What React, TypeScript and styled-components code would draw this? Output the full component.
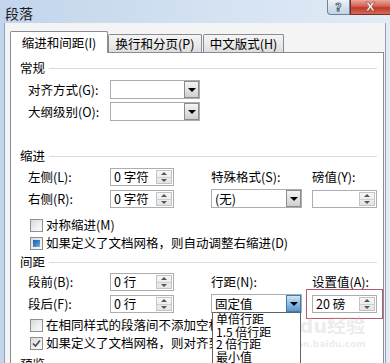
import React from "react";
import styled, { createGlobalStyle } from "styled-components";

const GlobalStyle = createGlobalStyle`
  html, body {
    margin: 0;
    padding: 0;
  }
  body {
    width: 390px;
    height: 363px;
    overflow: hidden;
    font-family: "Noto Sans CJK SC", "Liberation Sans", sans-serif;
    font-size: 12.5px;
    color: #000;
  }
`;

const Window = styled.div`
  position: relative;
  width: 390px;
  height: 363px;
  display: flex;
  flex-direction: column;
  overflow: hidden;
  background: linear-gradient(90deg, #c2d5ec 0%, #d4e2f2 55%, #e2ebf6 100%);
`;

const TitleBar = styled.div`
  height: 23px;
  flex: none;
  display: flex;
  justify-content: space-between;
  align-items: flex-start;
`;

const Title = styled.div`
  padding: 4px 0 0 5px;
  font-size: 14px;
  line-height: 18px;
  color: #1b1b1b;
`;

const Caption = styled.div`
  display: flex;
`;

const HelpButton = styled.div`
  width: 23px;
  height: 15px;
  box-sizing: border-box;
  border: 1px solid #6f8197;
  border-top: none;
  border-radius: 0 0 0 4px;
  background: linear-gradient(180deg, #eef3f9 0%, #d6e1ee 50%, #c5d3e4 100%);
  display: flex;
  align-items: center;
  justify-content: center;
  font-family: "DejaVu Sans", sans-serif;
  font-weight: bold;
  font-size: 11px;
  color: #f4f7fb;
  -webkit-text-stroke: 0.8px #44546a;
`;

const CloseButton = styled.div`
  width: 40px;
  height: 15px;
  box-sizing: border-box;
  border: 1px solid #7a2d25;
  border-top: none;
  border-right: none;
  background: linear-gradient(180deg, #e9a89b 0%, #d3604f 45%, #c0392b 55%, #d46a55 100%);
  display: flex;
  align-items: center;
  justify-content: center;
  font-family: "DejaVu Sans", sans-serif;
  font-weight: bold;
  font-size: 12px;
  color: #fff;
  -webkit-text-stroke: 0.5px #7a2d25;
`;

const Client = styled.div`
  flex: 1;
  margin: 0 4px;
  border-left: 1px solid #8fa1b6;
  border-right: 1px solid #8fa1b6;
  background: #f4f4f4;
  padding: 0 1px 0 5px;
  display: flex;
  flex-direction: column;
`;

const TabStrip = styled.div`
  height: 29px;
  flex: none;
  display: flex;
  align-items: flex-end;
  position: relative;
  z-index: 1;
`;

const Tab = styled.div<{ $width: number; $active?: boolean; $gap?: number }>`
  width: ${(p) => p.$width}px;
  height: ${(p) => (p.$active ? 22 : 18)}px;
  margin-left: ${(p) => p.$gap ?? 0}px;
  margin-bottom: ${(p) => (p.$active ? -1 : 0)}px;
  box-sizing: border-box;
  border: 1px solid #898c95;
  border-bottom: none;
  border-radius: 2px 2px 0 0;
  background: ${(p) =>
    p.$active
      ? "#fff"
      : "linear-gradient(180deg, #f5f5f5 0%, #ebebeb 50%, #dddddd 100%)"};
  display: flex;
  align-items: center;
  justify-content: center;
  padding-top: ${(p) => (p.$active ? 0 : 1)}px;
  white-space: nowrap;
  line-height: 16px;
`;

const Panel = styled.div`
  flex: 1;
  border: 1px solid #898c95;
  border-bottom: none;
  background: #fff;
  padding: 7px 6px 0 9px;
  display: flex;
  flex-direction: column;
`;

const SectionTitle = styled.div<{ $top?: number }>`
  margin-top: ${(p) => p.$top ?? 0}px;
  height: 16px;
  line-height: 16px;
  display: flex;
  align-items: center;
  gap: 4px;
  white-space: nowrap;

  &::after {
    content: "";
    flex: 1;
    border-top: 1px solid #d5dce4;
  }
`;

const FieldGrid = styled.div<{ $top?: number }>`
  margin-top: ${(p) => p.$top ?? 0}px;
  padding-left: 8px;
  display: grid;
  grid-template-columns: 82px 64px 37px 91px 10px 65px;
  grid-auto-rows: 18px;
  row-gap: 4px;
`;

const Label = styled.div<{ $col?: number }>`
  grid-column: ${(p) => p.$col ?? 1};
  display: flex;
  align-items: center;
  white-space: nowrap;
  line-height: 18px;
`;

const SelectBox = styled.div<{ $col?: number; $width: number }>`
  grid-column: ${(p) => p.$col ?? 2};
  position: relative;
  width: ${(p) => p.$width}px;
  height: 19px;
  margin-top: -1px;
  box-sizing: border-box;
  border: 1px solid #abadb3;
  background: #fff;
  display: flex;
  align-items: center;
  justify-content: space-between;
`;

const SelectValue = styled.span`
  padding-left: 3px;
  line-height: 16px;
  white-space: nowrap;
`;

const DropButton = styled.div<{ $pressed?: boolean }>`
  width: 15px;
  height: 100%;
  box-sizing: border-box;
  border: 1px solid ${(p) => (p.$pressed ? "#3d7bb0" : "#8c8c8c")};
  background: ${(p) =>
    p.$pressed
      ? "linear-gradient(180deg, #cfe6f8 0%, #8dbde6 50%, #5b97cc 100%)"
      : "linear-gradient(180deg, #f4f4f4 0%, #e2e2e2 50%, #cfcfcf 100%)"};
  display: flex;
  align-items: center;
  justify-content: center;

  &::after {
    content: "";
    border-left: 4px solid transparent;
    border-right: 4px solid transparent;
    border-top: 4px solid #000;
  }
`;

const DropList = styled.div`
  position: absolute;
  top: 100%;
  left: 0;
  width: 100%;
  box-sizing: border-box;
  border: 1px solid #646464;
  background: #fff;
  z-index: 5;
  padding-bottom: 2px;
`;

const DropItem = styled.div`
  padding-left: 3px;
  height: 12.7px;
  font-size: 12px;
  line-height: 12.7px;
  white-space: nowrap;
`;

const SpinBox = styled.div<{ $col?: number; $width: number; $marked?: boolean }>`
  grid-column: ${(p) => p.$col ?? 2};
  width: ${(p) => p.$width}px;
  height: 18px;
  box-sizing: border-box;
  border: 1px solid #abadb3;
  background: #fff;
  display: flex;
  align-items: stretch;
  justify-content: space-between;
  outline: ${(p) => (p.$marked ? "1px solid #b35a66" : "none")};
  outline-offset: 5px;
`;

const SpinValue = styled.span`
  padding-left: 3px;
  line-height: 16px;
  white-space: nowrap;
`;

const SpinButtons = styled.div`
  width: 14px;
  margin: 1px;
  display: flex;
  flex-direction: column;
  border: 1px solid #c4c4c4;
  background: linear-gradient(180deg, #f7f7f7 0%, #e4e4e4 100%);
`;

const SpinArrow = styled.div<{ $down?: boolean }>`
  flex: 1;
  display: flex;
  align-items: center;
  justify-content: center;
  border-top: ${(p) => (p.$down ? "1px solid #cfcfcf" : "none")};

  &::after {
    content: "";
    border-left: 3px solid transparent;
    border-right: 3px solid transparent;
    ${(p) =>
      p.$down
        ? "border-top: 3px solid #555;"
        : "border-bottom: 3px solid #555;"}
  }
`;

const CheckRow = styled.div<{ $top?: number }>`
  margin-top: ${(p) => p.$top ?? 0}px;
  padding-left: 10px;
  height: 14px;
  display: flex;
  align-items: center;
  gap: 3px;
  white-space: nowrap;
  line-height: 14px;
`;

const Box = styled.div`
  width: 13px;
  height: 13px;
  flex: none;
  box-sizing: border-box;
  border: 1px solid #8e8f8f;
  background: linear-gradient(135deg, #d9d9d9 0%, #f0f0f0 60%, #fbfbfb 100%);
  display: flex;
  align-items: center;
  justify-content: center;
`;

const BoxFill = styled.div`
  width: 7px;
  height: 7px;
  background: linear-gradient(135deg, #1f5f9e 0%, #3f86c8 55%, #7ab8e8 100%);
`;

const Watermark = styled.div`
  position: absolute;
  left: 266px;
  top: 317px;
  z-index: 3;
  pointer-events: none;
  color: rgba(190, 190, 190, 0.3);
  font-family: "DejaVu Sans", "Noto Sans CJK SC", sans-serif;
  font-weight: bold;
  line-height: 1;
  white-space: nowrap;
`;

const WatermarkBig = styled.div`
  font-size: 19px;
`;

const WatermarkSmall = styled.div`
  font-size: 9px;
  margin-top: 4px;
  padding-left: 6px;
`;

type CheckState = "off" | "filled" | "checked";

const CheckBox = ({ state }: { state: CheckState }) => (
  <Box>
    {state === "filled" && <BoxFill />}
    {state === "checked" && (
      <svg width="9" height="9" viewBox="0 0 9 9">
        <path d="M1 4.5 L3.5 7 L8 1.5" fill="none" stroke="#4b4b4b" strokeWidth="1.6" />
      </svg>
    )}
  </Box>
);

const Spin = ({
  value,
  col,
  width,
  marked,
}: {
  value?: string;
  col?: number;
  width: number;
  marked?: boolean;
}) => (
  <SpinBox $col={col} $width={width} $marked={marked}>
    <SpinValue>{value}</SpinValue>
    <SpinButtons>
      <SpinArrow />
      <SpinArrow $down />
    </SpinButtons>
  </SpinBox>
);

const lineSpacingOptions = ["单倍行距", "1.5 倍行距", "2 倍行距", "最小值"];

const App = () => {
  return (
    <>
      <GlobalStyle />
      <Window>
        <TitleBar>
          <Title>段落</Title>
          <Caption>
            <HelpButton>?</HelpButton>
            <CloseButton>X</CloseButton>
          </Caption>
        </TitleBar>

        <Client>
          <TabStrip>
            <Tab $width={98} $active>
              缩进和间距(I)
            </Tab>
            <Tab $width={94}>换行和分页(P)</Tab>
            <Tab $width={81} $gap={1}>
              中文版式(H)
            </Tab>
          </TabStrip>

          <Panel>
            <SectionTitle>常规</SectionTitle>
            <FieldGrid $top={5}>
              <Label>对齐方式(G):</Label>
              <SelectBox $width={90}>
                <SelectValue />
                <DropButton />
              </SelectBox>
              <Label>大纲级别(O):</Label>
              <SelectBox $width={90}>
                <SelectValue />
                <DropButton />
              </SelectBox>
            </FieldGrid>

            <SectionTitle $top={27}>缩进</SectionTitle>
            <FieldGrid $top={4}>
              <Label>左侧(L):</Label>
              <Spin value="0 字符" width={64} />
              <Label $col={4}>特殊格式(S):</Label>
              <Label $col={6}>磅值(Y):</Label>
              <Label>右侧(R):</Label>
              <Spin value="0 字符" width={64} />
              <SelectBox $col={4} $width={91}>
                <SelectValue>(无)</SelectValue>
                <DropButton />
              </SelectBox>
              <Spin col={6} width={65} />
            </FieldGrid>

            <CheckRow $top={10}>
              <CheckBox state="off" />
              对称缩进(M)
            </CheckRow>
            <CheckRow $top={4}>
              <CheckBox state="filled" />
              如果定义了文档网格，则自动调整右缩进(D)
            </CheckRow>

            <SectionTitle $top={4}>间距</SectionTitle>
            <FieldGrid $top={3}>
              <Label>段前(B):</Label>
              <Spin value="0 行" width={64} />
              <Label $col={4}>行距(N):</Label>
              <Label $col={6}>设置值(A):</Label>
              <Label>段后(F):</Label>
              <Spin value="0 行" width={64} />
              <SelectBox $col={4} $width={91}>
                <SelectValue>固定值</SelectValue>
                <DropButton $pressed />
                <DropList>
                  {lineSpacingOptions.map((o) => (
                    <DropItem key={o}>{o}</DropItem>
                  ))}
                </DropList>
              </SelectBox>
              <Spin col={6} width={65} value="20 磅" marked />
            </FieldGrid>

            <CheckRow $top={5}>
              <CheckBox state="off" />
              在相同样式的段落间不添加空格(C)
            </CheckRow>
            <CheckRow $top={4}>
              <CheckBox state="checked" />
              如果定义了文档网格，则对齐到网格(W)
            </CheckRow>

            <SectionTitle $top={6}>预览</SectionTitle>
          </Panel>
        </Client>

        <Watermark>
          <WatermarkBig>Baidu经验</WatermarkBig>
          <WatermarkSmall>jingyan.baidu.com</WatermarkSmall>
        </Watermark>
      </Window>
    </>
  );
};

export default App;
